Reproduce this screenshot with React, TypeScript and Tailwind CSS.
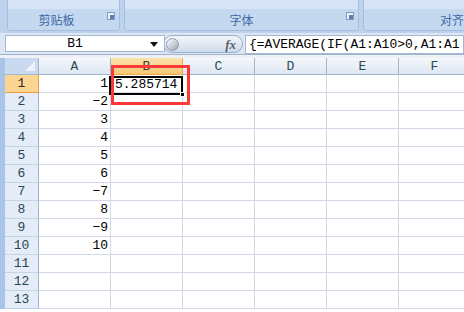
import React from "react";

const cols = ["A", "B", "C", "D", "E", "F"];
const values: (string | null)[] = ["1", "−2", "3", "4", "5", "6", "−7", "8", "−9", "10", null, null, null];

const Launcher = () => (
  <svg width="8" height="8" viewBox="0 0 8 8" className="shrink-0">
    <rect x="0.5" y="0.5" width="7" height="7" fill="#eef3fa" stroke="#7f9bc2" />
    <rect x="3" y="3" width="4" height="4" fill="#5d7fb0" />
  </svg>
);

const Group = ({ label, width, launcher }: { label: string; width: string; launcher?: boolean }) => (
  <div className={`${width} h-[31px] flex flex-col border-x border-b border-[#a5bede] rounded-b-[4px] overflow-hidden`}>
    <div className="h-[9px] bg-[#d7e4f5]" />
    <div className="relative h-[21px] bg-[#c4d8f0] flex items-center justify-center">
      <span className="text-[12px] text-[#3f67a6] font-['Noto_Sans_CJK_SC',sans-serif] leading-none">{label}</span>
      {launcher && (
        <div className="absolute right-[4px] top-[3px]">
          <Launcher />
        </div>
      )}
    </div>
  </div>
);

export default function App() {
  return (
    <div className="w-[464px] h-[312px] overflow-hidden bg-white font-['Liberation_Mono',monospace] relative">
      {/* ribbon */}
      <div className="h-[33px] bg-[#bed2ed] flex gap-[4px] pl-[7px]">
        <Group label="剪贴板" width="w-[113px] shrink-0 [&>div:last-child]:pr-[14px]" launcher />
        <Group label="字体" width="w-[235px] shrink-0" launcher />
        <div className="w-[120px] shrink-0 h-[31px] flex flex-col border-l border-b border-[#a5bede] rounded-bl-[4px] overflow-hidden">
          <div className="h-[9px] bg-[#d7e4f5]" />
          <div className="h-[21px] bg-[#c4d8f0] flex items-center pl-[76px]">
            <span className="text-[12px] text-[#3f67a6] font-['Noto_Sans_CJK_SC',sans-serif] leading-none whitespace-nowrap">对齐</span>
          </div>
        </div>
      </div>

      {/* formula bar */}
      <div className="h-[22px] bg-[#dde7f4] flex items-start pt-[2px] border-b border-[#9fb3cc]">
        <div className="ml-[5px] w-[160px] h-[17px] bg-white border border-[#a3b8d6] flex items-center relative shrink-0">
          <span className="flex-1 text-center text-[13px] text-black leading-none pr-[20px]">B1</span>
          <svg width="8" height="5" viewBox="0 0 8 5" className="absolute right-[6px] top-[6px]">
            <polygon points="0,0 8,0 4,5" fill="#111" />
          </svg>
        </div>
        <div className="-ml-[2px] w-[80px] h-[18px] rounded-full border border-[#98aecb] bg-gradient-to-b from-[#f4f7fb] to-[#cfdbea] flex items-center justify-between px-[2px] shrink-0">
          <div className="w-[13px] h-[13px] rounded-full bg-gradient-to-br from-[#ffffff] to-[#9aa6b6] border border-[#8e9cb0]" />
          <span className="italic font-bold text-[13px] text-[#555e6b] font-['Liberation_Serif',serif] pr-[4px] leading-none">fx</span>
        </div>
        <div className="ml-[2px] flex-1 h-[19px] bg-white border border-[#a3b8d6] flex items-center pl-[3px] overflow-hidden">
          <span className="text-[13px] text-black whitespace-nowrap leading-none">{"{=AVERAGE(IF(A1:A10>0,A1:A1"}</span>
        </div>
      </div>
      <div className="h-[3px] bg-[#eef1f6]" />

      {/* grid */}
      <div className="flex">
        <div className="w-[5px] shrink-0 bg-[#a9c4e9]" />
        <div className="flex flex-col">
          <div className="flex h-[17px]">
            <div className="w-[34px] shrink-0 bg-[#c9daf0] border-r border-b border-[#9eb6ce] relative">
              <svg width="10" height="10" viewBox="0 0 10 10" className="absolute right-[3px] bottom-[3px]">
                <polygon points="10,0 10,10 0,10" fill="#eef3fa" />
              </svg>
            </div>
            {cols.map((c) => (
              <div
                key={c}
                className={`w-[72px] shrink-0 border-r border-b flex items-center justify-center text-[13px] leading-none ${
                  c === "B"
                    ? "bg-gradient-to-b from-[#fbe2ab] to-[#f6c774] border-[#f2a649] text-[#3b3b2e]"
                    : "bg-gradient-to-b from-[#f5f8fc] to-[#dde6f2] border-[#9eb6ce] text-[#2e4a4c]"
                }`}
              >
                {c}
              </div>
            ))}
          </div>
          {values.map((v, i) => (
            <div key={i} className="flex h-[18px]">
              <div
                className={`w-[34px] shrink-0 border-r border-b flex items-center justify-center text-[13px] leading-none ${
                  i === 0
                    ? "bg-[#fbd591] border-[#f29a3c] text-[#2b2b22]"
                    : "bg-[#e4ecf7] border-r-[#9eb6ce] border-b-[#c5d3e6] text-[#2a4650]"
                }`}
              >
                {i + 1}
              </div>
              {cols.map((c) => (
                <div
                  key={c}
                  className="w-[72px] shrink-0 border-r border-b border-[#d0d7e5] flex items-center justify-end pr-[2px] text-[13px] text-black leading-none"
                >
                  {c === "A" && v !== null ? v : ""}
                  {c === "B" && i === 0 ? (
                    <span className="w-full pl-[4px] pt-[1px] text-left">5.285714</span>
                  ) : null}
                </div>
              ))}
            </div>
          ))}
        </div>
      </div>

      {/* active cell */}
      <div className="absolute left-[109px] top-[76px] w-[74px] h-[19px] border-2 border-black pointer-events-none" />
      <div className="absolute left-[180px] top-[92px] w-[5px] h-[5px] bg-black border border-white pointer-events-none" />
      {/* red highlight */}
      <div className="absolute left-[111px] top-[65px] w-[79px] h-[40px] border-[3px] border-[#fa3a3a] pointer-events-none" />
    </div>
  );
}
